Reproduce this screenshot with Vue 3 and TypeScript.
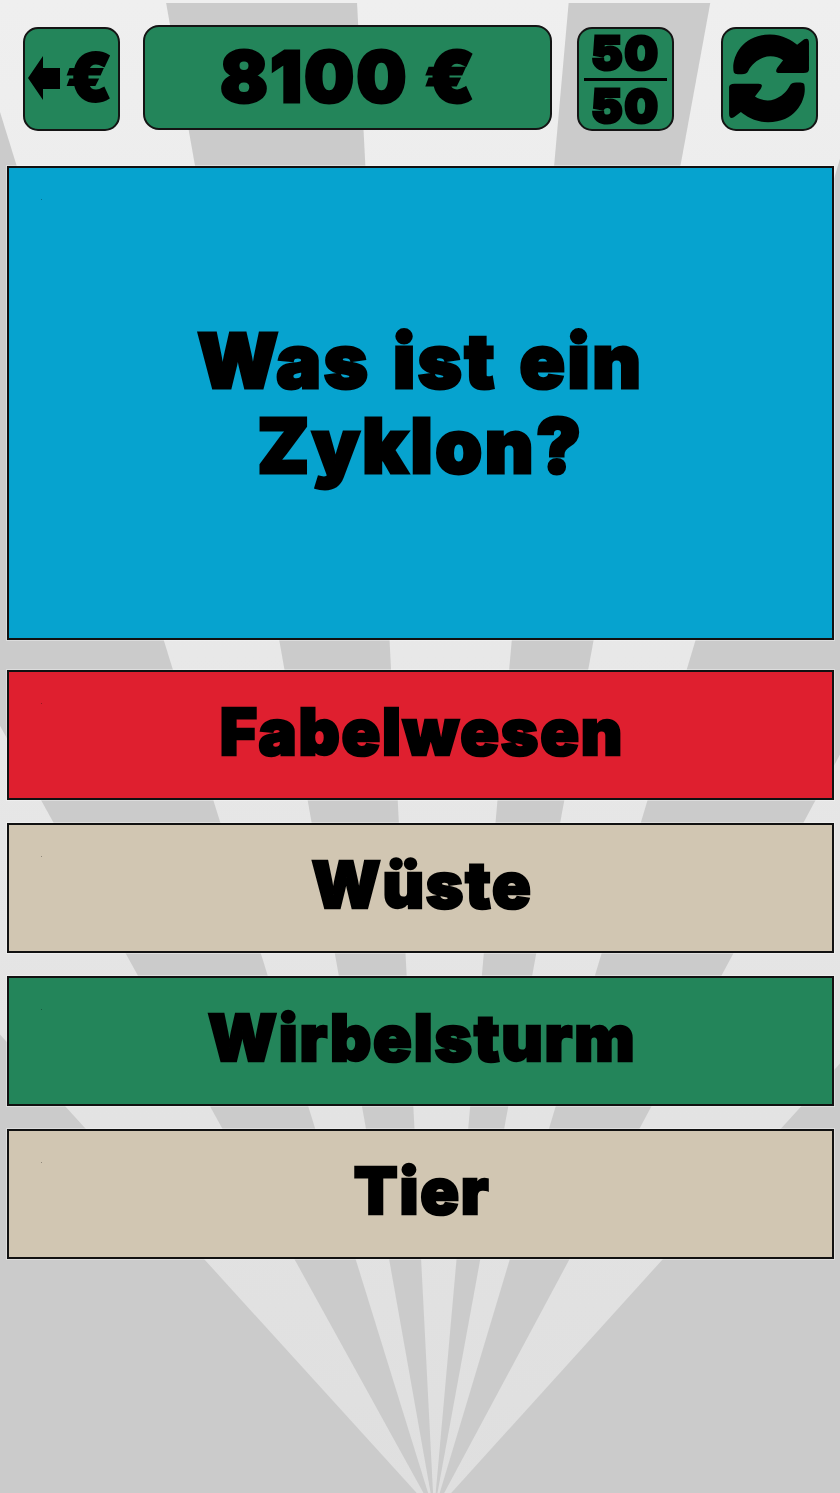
<script setup lang="ts">
const apexX = 434
const apexY = 1512
const bands: [number, number][] = [
  [-0.552, -0.31],
  [-0.1775, -0.051],
  [0.0892, 0.1831],
  [0.3, 0.536],
]
const edge = (t: number) => (apexX + t * apexY).toFixed(1)
const rays = bands.map(([a, b]) => `${apexX},${apexY} ${edge(a)},0 ${edge(b)},0`)
rays.push(`${apexX},${apexY} ${edge(-0.909)},0 -2000,0 -2000,${apexY}`)
rays.push(`${apexX},${apexY} ${edge(0.905)},0 3000,0 3000,${apexY}`)

const answers = [
  { text: 'Fabelwesen', tone: 'red' },
  { text: 'Wüste', tone: 'tan' },
  { text: 'Wirbelsturm', tone: 'green' },
  { text: 'Tier', tone: 'tan' },
]
</script>

<template>
  <div class="page">
    <svg class="rays" width="840" height="1490" viewBox="0 3 840 1490" aria-hidden="true">
      <polygon v-for="(p, i) in rays" :key="i" :points="p" fill="#cbcbcb" />
    </svg>

    <header class="top">
      <button class="tool back">
        <svg class="arrow" width="33" height="44" viewBox="0 0 33 44" aria-hidden="true">
          <polygon points="0,22 15,0 15,12 32,12 32,33 15,33 15,44" fill="#000" />
        </svg>
        <span class="back-euro">€</span>
      </button>
      <div class="money"><span class="money-label">8100 €</span></div>
      <button class="tool half">
        <span class="half-num">50</span>
        <span class="half-line"></span>
        <span class="half-num">50</span>
      </button>
      <button class="tool swap">
        <svg width="97" height="104" viewBox="18 21 291 312" aria-hidden="true">
          <path d="M52 157 C42 120 70 38 165 38 C205 38 235 58 250 70 L272 53 Q287 46 287 65 L287 147 Q287 158 270 158 L195 158 Q178 158 188 142 L206 118 C190 107 165 102 145 110 C125 117 107 132 97 152 Q92 162 77 162 L64 162 Q54 162 52 157 Z" fill="#000" />
          <path d="M52 157 C42 120 70 38 165 38 C205 38 235 58 250 70 L272 53 Q287 46 287 65 L287 147 Q287 158 270 158 L195 158 Q178 158 188 142 L206 118 C190 107 165 102 145 110 C125 117 107 132 97 152 Q92 162 77 162 L64 162 Q54 162 52 157 Z" fill="#000" transform="rotate(180 162 175)" />
        </svg>
      </button>
    </header>

    <section class="question speck">
      <h1>Was ist ein<br />Zyklon?</h1>
    </section>

    <div class="answers">
      <button v-for="a in answers" :key="a.text" class="answer speck" :class="a.tone">
        <span class="answer-label">{{ a.text }}</span>
      </button>
    </div>
  </div>
</template>

<style>
html, body { margin: 0; padding: 0; }
</style>

<style scoped>
.page {
  position: relative;
  width: 840px;
  height: 1493px;
  overflow: hidden;
  box-sizing: border-box;
  padding: 25px 5px 0 7px;
  background: linear-gradient(#efefef, #dfdfdf);
  font-family: Inter, Roboto, "Liberation Sans", sans-serif;
  font-weight: 900;
  color: #000;
  filter: blur(0.55px);
}
.rays { position: absolute; left: 0; top: 3px; }
.top {
  position: relative;
  display: flex;
  align-items: flex-start;
  height: 141px;
  padding-left: 16px;
}
button { font: inherit; color: inherit; padding: 0; margin: 0; }
.tool {
  flex: none;
  width: 97px;
  height: 104px;
  margin-top: 2px;
  box-sizing: border-box;
  border: 2px solid #141414;
  border-radius: 15px;
  background: #23855a;
  display: flex;
  align-items: center;
  justify-content: center;
}
.back { position: relative; justify-content: flex-start; }
.arrow { position: absolute; left: 3px; top: 27px; }
.back-euro {
  position: absolute;
  left: 41px;
  top: 10px;
  font-size: 66px;
  line-height: 76px;
  -webkit-text-stroke: 2px #000;
}
.money {
  flex: none;
  width: 409px;
  height: 105px;
  margin-left: 23px;
  box-sizing: border-box;
  border: 2px solid #141414;
  border-radius: 16px;
  background: #23855a;
  display: flex;
  align-items: center;
  justify-content: center;
  font-size: 70px;
  line-height: 1;
  letter-spacing: 2.5px;
  -webkit-text-stroke: 3px #000;
}
.money-label { margin-bottom: 2px; margin-left: 2px; }
.half {
  margin-left: 25px;
  flex-direction: column;
  gap: 0;
}
.half-num {
  font-size: 47px;
  line-height: 42px;
  letter-spacing: 2px;
  -webkit-text-stroke: 3px #000;
}
.half-line {
  width: 83px;
  height: 3px;
  margin: 4px 0;
  background: #000;
}
.swap { margin-left: 47px; }
.question {
  position: relative;
  width: 827px;
  height: 474px;
  box-sizing: border-box;
  border: 2px solid #111;
  background: #06a3cf;
  display: flex;
  align-items: center;
  justify-content: center;
  text-align: center;
  box-shadow: 0 0 0 1px rgba(255, 255, 255, 0.35);
}
h1 {
  margin: 0;
  font-size: 75px;
  line-height: 85px;
  font-weight: 900;
  letter-spacing: 2.6px;
  word-spacing: 5px;
  -webkit-text-stroke: 3px #000;
}
.answers {
  margin-top: 30px;
  display: flex;
  flex-direction: column;
  gap: 23px;
}
.answer {
  position: relative;
  display: flex;
  align-items: center;
  justify-content: center;
  width: 827px;
  height: 130px;
  box-sizing: border-box;
  border: 2px solid #111;
  font-size: 64px;
  line-height: 1;
  letter-spacing: 1.8px;
  box-shadow: 0 0 0 1px rgba(255, 255, 255, 0.35);
  -webkit-text-stroke: 2.5px #000;
}
.answer-label { margin-bottom: 6px; margin-left: 3px; }
.speck::before {
  content: "";
  position: absolute;
  left: 32px;
  top: 31px;
  width: 1px;
  height: 1px;
  background: rgba(0, 0, 0, 0.3);
}
.red { background: #df1f2f; }
.tan { background: #d1c6b2; }
.green { background: #23855a; }
</style>
